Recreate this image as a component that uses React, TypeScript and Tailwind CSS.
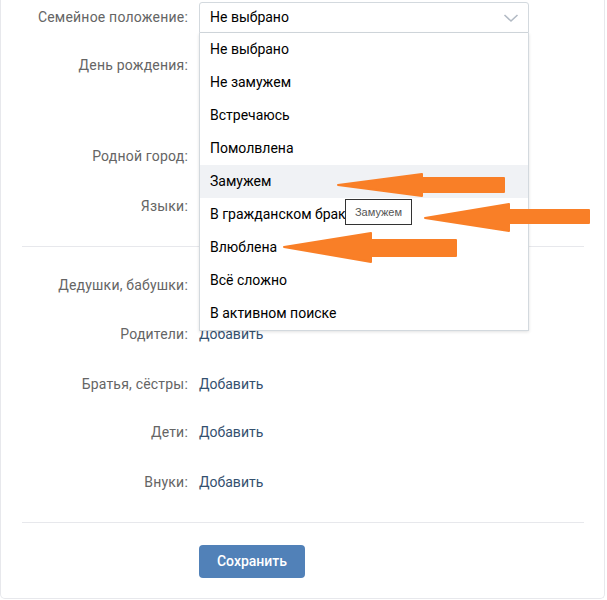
import React from "react";

const statuses = [
  "Не выбрано",
  "Не замужем",
  "Встречаюсь",
  "Помолвлена",
  "Замужем",
  "В гражданском браке",
  "Влюблена",
  "Всё сложно",
  "В активном поиске",
];

function Row({
  label,
  children,
  className = "",
}: {
  label: string;
  children?: React.ReactNode;
  className?: string;
}) {
  return (
    <div className={"flex items-center h-[31px] " + className}>
      <div className="w-[187px] text-right text-[#656565] tracking-[0.2px]">{label}</div>
      <div className="ml-[11px]">{children}</div>
    </div>
  );
}

function AddLink() {
  return <a className="text-[#34506f]">Добавить</a>;
}

function StatusSelect() {
  return (
    <div className="relative w-[330px]">
      <div className="flex items-center justify-between h-[31px] px-[10px] border border-[#d3d9de] rounded-t-[3px] bg-white text-black">
        <span>Не выбрано</span>
        <svg width="16" height="10" viewBox="0 0 16 10" className="mr-[-1px]">
          <polyline
            points="1.5,2 8,8 14.5,2"
            fill="none"
            stroke="#b2bac4"
            strokeWidth="1.6"
          />
        </svg>
      </div>
      <ul className="absolute left-0 top-full z-10 w-full bg-white border border-t-0 border-[#d3d9de] shadow-[0_1px_3px_rgba(0,0,0,0.12)]">
        {statuses.map((s, i) => (
          <li
            key={s}
            className={
              "h-[33px] flex items-center px-[10px] text-black " +
              (i === 4 ? "bg-[#f0f2f5]" : "")
            }
          >
            {s}
          </li>
        ))}
      </ul>
    </div>
  );
}

export default function App() {
  return (
    <div className="min-h-screen bg-white font-['Roboto','Liberation_Sans',sans-serif] text-[14px]">
      <div className="relative w-[605px] border-x border-b border-[#e7e8ec] rounded-b-[5px] pt-[2px] pb-5">
        <Row label="Семейное положение:" className="relative z-10">
          <StatusSelect />
        </Row>
        <Row label="День рождения:" className="mt-[17px]" />
        <div className="h-[60px]" />
        <Row label="Родной город:" />
        <Row label="Языки:" className="mt-[19px]" />

        <div className="ml-[21px] mr-[20px] mt-[24px] border-t border-[#e7e8ec]" />

        {/* value sits under the open dropdown */}
        <Row label="Дедушки, бабушки:" className="mt-[23px]" />
        <Row label="Родители:" className="mt-[18px]">
          <AddLink />
        </Row>
        <Row label="Братья, сёстры:" className="mt-[19px]">
          <AddLink />
        </Row>
        <Row label="Дети:" className="mt-[17px]">
          <AddLink />
        </Row>
        <Row label="Внуки:" className="mt-[19px]">
          <AddLink />
        </Row>

        <div className="ml-[21px] mr-[20px] mt-[24px] border-t border-[#e7e8ec]" />

        <div className="mt-[22px] pl-[198px]">
          <button className="h-[33px] w-[106px] rounded-[4px] bg-[#5181b8] text-white font-medium text-[14px]">
            Сохранить
          </button>
        </div>

        <div className="absolute left-[344px] top-[199px] z-20 h-[26px] w-[67px] border border-[#333] bg-white flex items-center justify-center font-['Liberation_Sans',sans-serif] text-[11px] text-[#555]">
          Замужем
        </div>

        <svg
          className="absolute inset-0 z-30 pointer-events-none"
          width="607"
          height="600"
        >
          <g fill="#f97f27" stroke="#f97f27" strokeWidth="2" strokeLinejoin="round">
            <polygon points="337,185 421,174 421,178 503,178 503,192 421,192 421,196" />
            <polygon points="424,218 508,204 508,210 588,210 588,223 508,223 508,231" />
            <polygon points="283,247 370,233 370,240 455,240 455,256 370,256 370,262" />
          </g>
        </svg>
      </div>
    </div>
  );
}
